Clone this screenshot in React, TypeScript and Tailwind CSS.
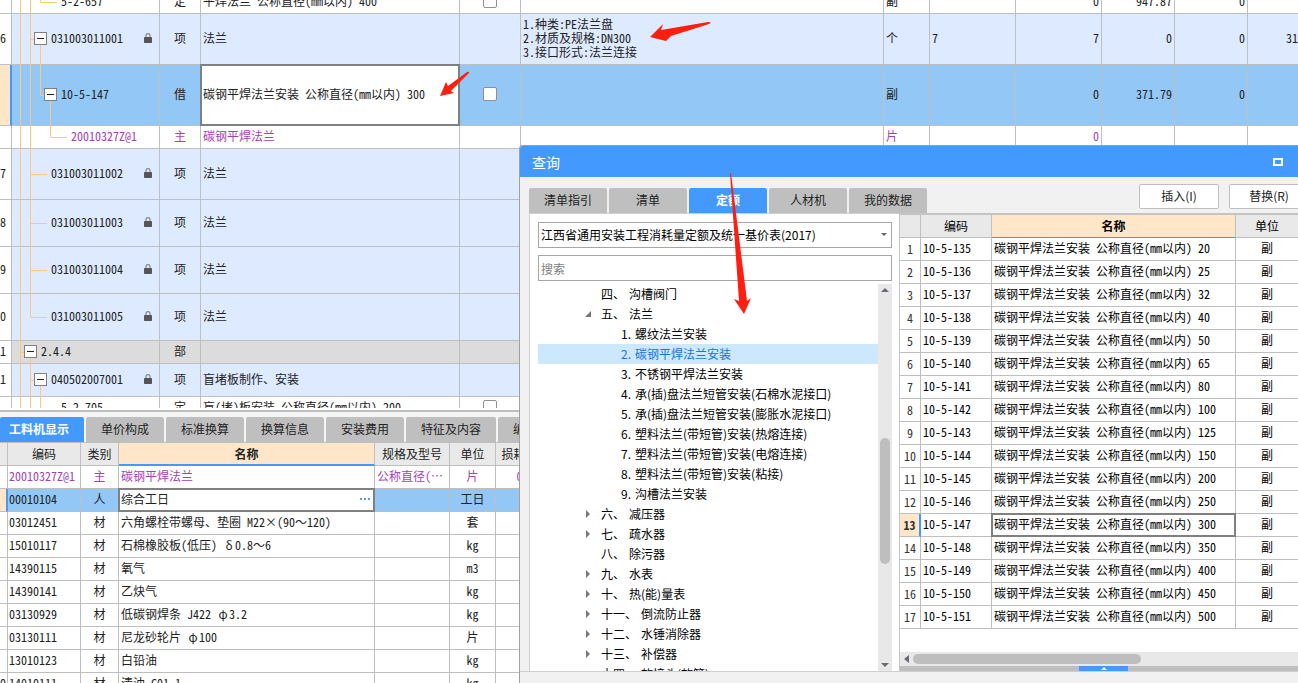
import clsx from 'clsx';

type TreeNode = { level: number; through: number[]; last?: boolean; box?: boolean };

type BillRow = {
  no: string;
  code: string;
  node: TreeNode;
  lock?: boolean;
  kind: string;
  name: string;
  check?: boolean;
  feature?: string[];
  unit?: string;
  expr?: string;
  values?: string[];
  height: string;
  tone: string;
  selected?: boolean;
};

const BILL_ROWS: BillRow[] = [
  { no: '', code: '5-2-657', node: { level: 2, through: [0, 1], last: true }, kind: '定', name: '平焊法兰 公称直径(mm以内) 400', check: true, unit: '副', values: ['0', '947.87', '0', ''], height: 'h-[23px]', tone: 'bg-white' },
  { no: '6', code: '031003011001', node: { level: 1, through: [0], box: true }, lock: true, kind: '项', name: '法兰', feature: ['1.种类:PE法兰盘', '2.材质及规格:DN300', '3.接口形式:法兰连接'], unit: '个', expr: '7', values: ['7', '0', '0', '31'], height: 'h-[51px]', tone: 'bg-[#deeaff]' },
  { no: '', code: '10-5-147', node: { level: 2, through: [0, 1], last: true, box: true }, kind: '借', name: '碳钢平焊法兰安装 公称直径(mm以内) 300', check: true, unit: '副', values: ['0', '371.79', '0', ''], height: 'h-[61px]', tone: 'bg-[#93c8f6]', selected: true },
  { no: '', code: '20010327Z@1', node: { level: 3, through: [0, 1], last: true }, kind: '主', name: '碳钢平焊法兰', unit: '片', values: ['0', '', '', ''], height: 'h-[23px]', tone: 'bg-white text-[#a53fb5]' },
  { no: '7', code: '031003011002', node: { level: 1, through: [0] }, lock: true, kind: '项', name: '法兰', height: 'h-[51px]', tone: 'bg-[#deeaff]' },
  { no: '8', code: '031003011003', node: { level: 1, through: [0] }, lock: true, kind: '项', name: '法兰', height: 'h-[47px]', tone: 'bg-[#deeaff]' },
  { no: '9', code: '031003011004', node: { level: 1, through: [0] }, lock: true, kind: '项', name: '法兰', height: 'h-[47px]', tone: 'bg-[#deeaff]' },
  { no: '0', code: '031003011005', node: { level: 1, through: [0], last: true }, lock: true, kind: '项', name: '法兰', height: 'h-[47px]', tone: 'bg-[#deeaff]' },
  { no: '1', code: '2.4.4', node: { level: 0, through: [], box: true }, kind: '部', name: '', height: 'h-[23px]', tone: 'bg-[#dcdcdc]' },
  { no: '1', code: '040502007001', node: { level: 1, through: [0], box: true }, lock: true, kind: '项', name: '盲堵板制作、安装', height: 'h-[33px]', tone: 'bg-[#deeaff]' },
  { no: '', code: '5-2-705', node: { level: 2, through: [0, 1], last: true }, kind: '定', name: '盲(堵)板安装 公称直径(mm以内) 200', check: true, height: 'h-[23px]', tone: 'bg-white' },
];

const MATERIALS = [
  { no: '', code: '20010327Z@1', kind: '主', name: '碳钢平焊法兰', spec: '公称直径(…', unit: '片', loss: '0' },
  { no: '', code: '00010104', kind: '人', name: '综合工日', spec: '', unit: '工日', loss: '' },
  { no: '', code: '03012451', kind: '材', name: '六角螺栓带螺母、垫圈 M22×(90～120)', spec: '', unit: '套', loss: '' },
  { no: '', code: '15010117', kind: '材', name: '石棉橡胶板(低压) δ0.8～6', spec: '', unit: 'kg', loss: '' },
  { no: '', code: '14390115', kind: '材', name: '氧气', spec: '', unit: 'm3', loss: '' },
  { no: '', code: '14390141', kind: '材', name: '乙炔气', spec: '', unit: 'kg', loss: '' },
  { no: '', code: '03130929', kind: '材', name: '低碳钢焊条 J422 φ3.2', spec: '', unit: 'kg', loss: '' },
  { no: '', code: '03130111', kind: '材', name: '尼龙砂轮片 φ100', spec: '', unit: '片', loss: '' },
  { no: '', code: '13010123', kind: '材', name: '白铅油', spec: '', unit: 'kg', loss: '' },
  { no: '0', code: '14010111', kind: '材', name: '清油 C01-1', spec: '', unit: 'kg', loss: '' },
];

const DETAIL_TABS = [
  { label: '工料机显示', width: 'w-[84px]' },
  { label: '单价构成', width: 'w-[78px]' },
  { label: '标准换算', width: 'w-[78px]' },
  { label: '换算信息', width: 'w-[78px]' },
  { label: '安装费用', width: 'w-[78px]' },
  { label: '特征及内容', width: 'w-[90px]' },
  { label: '编制说明', width: 'w-[78px]' },
];

const QUERY_TABS = ['清单指引', '清单', '定额', '人材机', '我的数据'];

const CHAPTERS = [
  { no: '四、', title: '沟槽阀门' },
  { no: '五、', title: '法兰', arrow: 'open' },
  { no: '1.', title: '螺纹法兰安装', child: true },
  { no: '2.', title: '碳钢平焊法兰安装', child: true, active: true },
  { no: '3.', title: '不锈钢平焊法兰安装', child: true },
  { no: '4.', title: '承(插)盘法兰短管安装(石棉水泥接口)', child: true },
  { no: '5.', title: '承(插)盘法兰短管安装(膨胀水泥接口)', child: true },
  { no: '6.', title: '塑料法兰(带短管)安装(热熔连接)', child: true },
  { no: '7.', title: '塑料法兰(带短管)安装(电熔连接)', child: true },
  { no: '8.', title: '塑料法兰(带短管)安装(粘接)', child: true },
  { no: '9.', title: '沟槽法兰安装', child: true },
  { no: '六、', title: '减压器', arrow: 'closed' },
  { no: '七、', title: '疏水器', arrow: 'closed' },
  { no: '八、', title: '除污器' },
  { no: '九、', title: '水表', arrow: 'closed' },
  { no: '十、', title: '热(能)量表', arrow: 'closed' },
  { no: '十一、', title: '倒流防止器', arrow: 'closed' },
  { no: '十二、', title: '水锤消除器', arrow: 'closed' },
  { no: '十三、', title: '补偿器', arrow: 'closed' },
  { no: '十四、', title: '软接头(软管)' },
];

const SIZES = [20, 25, 32, 40, 50, 65, 80, 100, 125, 150, 200, 250, 300, 350, 400, 450, 500];
const QUOTAS = SIZES.map((size, i) => ({
  code: `10-5-${135 + i}`,
  name: `碳钢平焊法兰安装 公称直径(mm以内) ${size}`,
  active: size === 300,
}));

const GRID_FONT = "font-['Noto_Sans_Mono_CJK_SC','Noto_Sans_CJK_SC',monospace]";
const UI_FONT = "font-['Noto_Sans_CJK_SC',sans-serif]";
const TABLE = 'w-full table-fixed border-separate border-spacing-0';
const HEAD = 'border-r border-b border-[#bfbfbf] p-0 whitespace-nowrap overflow-hidden';
const CELL = 'border-r border-b border-[#bfbfbf] px-0 pt-0 pb-0.5 whitespace-nowrap overflow-hidden';
const ACTIVE_CELL =
  'relative z-10 bg-white overflow-visible! after:pointer-events-none after:absolute after:-inset-px after:border-2 after:border-[#808080]';

function LockIcon() {
  return (
    <svg viewBox="0 0 8 10" className="mr-[7px] h-2.5 w-2 shrink-0" aria-hidden="true">
      <path d="M2 5V2.6a2 2 0 0 1 4 0V5" fill="none" stroke="#8a8d93" strokeWidth="1.3" />
      <rect y="4" width="8" height="6" rx="0.8" fill="#555" />
    </svg>
  );
}

// Greek size marks take a full character cell
function MaterialName({ name }: { name: string }) {
  return (
    <span className="whitespace-pre">
      {name.split(/([δφ])/).map((part, i) =>
        i % 2 ? (
          <span key={i} className="inline-block w-3 text-center">
            {part}
          </span>
        ) : (
          part
        ),
      )}
    </span>
  );
}

const levelX = (level: number) => 8.5 + level * 10;

function TreeLines({ node }: { node: TreeNode }) {
  const x = levelX(node.level);
  return (
    <svg className="pointer-events-none absolute top-0 left-0 h-[calc(100%+1px)] w-full" stroke="#ffc67c" aria-hidden="true">
      {node.through.map((level) => (
        <line key={level} x1={levelX(level)} x2={levelX(level)} y1="0" y2="100%" />
      ))}
      <line x1={x} x2={x} y1="0" y2={node.last ? '50%' : '100%'} />
      <line x1={x} x2={x + (node.box ? 5 : 16)} y1="50%" y2="50%" shapeRendering="crispEdges" />
      {node.box && <line x1={x + 10} x2={x + 10} y1="50%" y2="100%" />}
    </svg>
  );
}

function BillGrid() {
  return (
    <div className="mb-px min-h-0 flex-1 overflow-hidden">
      <table className={clsx(TABLE, '-mt-[9px] text-xs leading-[14px] text-[#222]')}>
        <colgroup>
          <col className="w-3" />
          <col className="w-[148px]" />
          <col className="w-[41px]" />
          <col className="w-[259px]" />
          <col className="w-[61px]" />
          <col className="w-[363px]" />
          <col className="w-[46px]" />
          <col className="w-[86px]" />
          <col className="w-[86px]" />
          <col className="w-[73px]" />
          <col className="w-[73px]" />
          <col />
        </colgroup>
        <tbody>
          {BILL_ROWS.map((row) => (
            <tr key={row.code} className={clsx(row.height, row.tone)}>
              <td className={clsx(CELL, row.selected ? 'border-r-2 border-r-[#4499ff] bg-[#ffe6c9]' : 'bg-white')}>
                {row.no}
              </td>
              <td className="relative border-r border-b border-[#bfbfbf] px-0 pt-0 pb-0.5">
                <TreeLines node={row.node} />
                <div className="relative flex items-center">
                  <span className="shrink-0" style={{ width: row.node.level * 10 + 12 }} />
                  {row.node.box ? (
                    <button type="button" aria-label="折叠" className="mr-1 flex size-[13px] shrink-0 items-center justify-center border border-[#808080] bg-white">
                      <span className="h-px w-[7px] bg-[#222]" />
                    </button>
                  ) : (
                    <span className="w-[17px] shrink-0" />
                  )}
                  <span className="flex-1">{row.code}</span>
                  {row.lock && <LockIcon />}
                </div>
              </td>
              <td className={clsx(CELL, 'text-center')}>{row.kind}</td>
              <td className={clsx(CELL, 'pl-0.5', row.selected && ACTIVE_CELL)}>{row.name}</td>
              <td className={CELL}>
                {row.check && (
                  <input type="checkbox" aria-label="选择" className="mx-auto block size-3.5 appearance-none rounded-xs border border-[#8f8f8f] bg-white" />
                )}
              </td>
              <td className={clsx(CELL, 'pl-0.5')}>
                {row.feature?.map((line) => <div key={line}>{line}</div>)}
              </td>
              <td className={clsx(CELL, 'pl-0.5')}>{row.unit}</td>
              <td className={clsx(CELL, 'pl-0.5')}>{row.expr}</td>
              {(row.values ?? ['', '', '', '']).map((value, i) => (
                <td key={i} className={clsx(CELL, 'text-right', i < 3 && 'pr-0.5', i === 3 && 'border-r-0')}>
                  {value}
                </td>
              ))}
            </tr>
          ))}
        </tbody>
      </table>
    </div>
  );
}

function DetailPanel() {
  return (
    <section className="h-[274px] shrink-0 overflow-hidden bg-white pt-px">
      <div className={clsx(UI_FONT, 'flex gap-0.5 border-t-2 border-b border-[#bfbfbf] bg-[#f4f4f4] pt-[5px] text-xs text-[#222]')}>
        {DETAIL_TABS.map((tab, i) => (
          <button
            key={tab.label}
            type="button"
            className={clsx('h-[25px] shrink-0 rounded-t-xs pb-0.5', tab.width, i === 0 ? 'bg-[#4499ff] pr-1.5 font-bold text-white' : 'bg-[#bfbfbf]')}
          >
            {tab.label}
          </button>
        ))}
      </div>
      <table className={clsx(TABLE, 'text-xs leading-[14px] text-[#222]')}>
        <colgroup>
          <col className="w-2" />
          <col className="w-[73px]" />
          <col className="w-[38px]" />
          <col className="w-64" />
          <col className="w-[75px]" />
          <col className="w-[46px]" />
          <col className="w-12" />
          <col />
        </colgroup>
        <thead>
          <tr className="h-[23px] bg-[#e9e9e9] [&>th]:font-normal">
            <th className={HEAD} />
            <th className={HEAD}>编码</th>
            <th className={HEAD}>类别</th>
            <th className={clsx(HEAD, 'border-b-2 border-b-[#4499ff] bg-[#ffe6c9]')}>
              <b>名称</b>
            </th>
            <th className={HEAD}>规格及型号</th>
            <th className={HEAD}>单位</th>
            <th className={HEAD}>损耗率</th>
            <th className={HEAD} />
          </tr>
        </thead>
        <tbody>
          {MATERIALS.map((item, i) => {
            const active = i === 1;
            return (
              <tr key={item.code} className={clsx('h-[23px]', active && 'bg-[#93c8f6]', i === 0 && 'text-[#a53fb5]')}>
                <td className={clsx(CELL, active && 'border-r-2 border-r-[#4499ff] bg-[#ffe6c9]')}>{item.no}</td>
                <td className={clsx(CELL, 'pl-px')}>{item.code}</td>
                <td className={clsx(CELL, 'text-center')}>{item.kind}</td>
                <td className={clsx(CELL, 'pl-0.5', active && ACTIVE_CELL)}>
                  <div className="flex items-center justify-between pr-1">
                    <MaterialName name={item.name} />
                    {active && (
                      <button type="button" aria-label="更多" className="flex gap-0.5">
                        <span className="size-0.5 bg-[#5aa0d8]" />
                        <span className="size-0.5 bg-[#5aa0d8]" />
                        <span className="size-0.5 bg-[#5aa0d8]" />
                      </button>
                    )}
                  </div>
                </td>
                <td className={clsx(CELL, 'pl-0.5')}>{item.spec}</td>
                <td className={clsx(CELL, 'text-center')}>{item.unit}</td>
                <td className={clsx(CELL, 'text-center')}>{item.loss}</td>
                <td className={CELL} />
              </tr>
            );
          })}
        </tbody>
      </table>
    </section>
  );
}

function ChapterTree() {
  return (
    <div className="mt-[3px] flex min-h-0 flex-1">
      <ul className="min-w-0 flex-1 overflow-hidden">
        {CHAPTERS.map((item) => (
          <li
            key={item.no}
            className={clsx('flex h-5 items-center gap-1 whitespace-nowrap', item.child ? 'pl-[83px]' : 'pl-[46px]', item.active && 'bg-[#cce8ff] text-[#1a73e0]')}
          >
            {!item.child && (
              <svg viewBox="0 0 8 8" className="mr-[5px] size-2 shrink-0 fill-[#777]" aria-hidden="true">
                {item.arrow === 'open' && <path d="M7 1v6H1z" />}
                {item.arrow === 'closed' && <path d="M2 0l4 4-4 4z" />}
              </svg>
            )}
            <span>{item.no}</span>
            <span>{item.title}</span>
          </li>
        ))}
      </ul>
      <div className="flex w-3.5 flex-col items-center justify-between bg-[#e8e8e8] py-1">
        <svg viewBox="0 0 8 4" className="h-1 w-2 fill-[#6b6b74]" aria-hidden="true">
          <path d="M4 0l4 4H0z" />
        </svg>
        <div className="mt-[46px] h-[126px] w-2.5 rounded-full bg-[#bebebe]" />
        <svg viewBox="0 0 8 4" className="h-1 w-2 fill-[#6b6b74]" aria-hidden="true">
          <path d="M4 4l4-4H0z" />
        </svg>
      </div>
    </div>
  );
}

function QuotaTable() {
  return (
    <div className="flex min-w-0 flex-1 flex-col border-t-2 border-l border-[#c4c4c4] bg-white">
      <div className="min-h-0 flex-1 overflow-hidden">
        <table className={clsx(TABLE, GRID_FONT, 'text-xs leading-[14px] text-black')}>
          <colgroup>
            <col className="w-[21px]" />
            <col className="w-[71px]" />
            <col className="w-[244px]" />
            <col />
          </colgroup>
          <thead>
            <tr className="h-[23px] bg-[#e9e9e9] [&>th]:font-normal">
              <th className={HEAD} />
              <th className={HEAD}>编码</th>
              <th className={clsx(HEAD, 'border-b-[#4499ff] bg-[#ffe6c9]')}>
                <b>名称</b>
              </th>
              <th className={clsx(HEAD, 'border-r-0')}>单位</th>
            </tr>
          </thead>
          <tbody>
            {QUOTAS.map((quota, i) => (
              <tr key={quota.code} className="h-[23px]">
                <td className={clsx(HEAD, 'text-center text-[#333]', quota.active && 'border-r-2 border-r-[#4499ff] bg-[#ffe6c9] font-bold')}>
                  {i + 1}
                </td>
                <td className={clsx(CELL, 'pl-0.5')}>{quota.code}</td>
                <td className={clsx(CELL, 'pl-0.5', quota.active && ACTIVE_CELL)}>{quota.name}</td>
                <td className={clsx(CELL, 'border-r-0 text-center')}>副</td>
              </tr>
            ))}
          </tbody>
        </table>
      </div>
      <div className="flex h-3.5 items-center gap-1 bg-[#e8e8e8] pl-1">
        <svg viewBox="0 0 5 8" className="h-2 w-[5px] fill-[#6b6b74]" aria-hidden="true">
          <path d="M5 0v8L0 4z" />
        </svg>
        <div className="h-2.5 w-[228px] rounded-full bg-[#bebebe]" />
      </div>
      <div className="h-[5px] bg-[#bfbfbf] pl-[179px]">
        <button type="button" aria-label="展开" className="flex h-[5px] w-[49px] items-center justify-center bg-[#4499ff]">
          <svg viewBox="0 0 6 3" className="h-[3px] w-1.5 fill-white" aria-hidden="true">
            <path d="M3 0l3 3H0z" />
          </svg>
        </button>
      </div>
    </div>
  );
}

function QueryDialog() {
  return (
    <section
      role="dialog"
      aria-label="查询"
      className={clsx(UI_FONT, 'absolute top-[145px] right-0 bottom-0 left-[519px] z-20 flex flex-col overflow-hidden rounded-tl-sm border-t border-l border-[#a0a0a0] bg-[#f1f1f1] text-xs text-black')}
    >
      <header className="flex h-[31px] shrink-0 items-center justify-between bg-[#4499ff] pr-[15px] pl-3 text-white">
        <h2 className="text-sm leading-5">查询</h2>
        <button type="button" aria-label="最大化" className="h-2 w-2.5 border-2 border-white" />
      </header>

      <div className="-mr-[11px] flex shrink-0 items-end pt-[7px] pl-[9px] text-[#222]">
        <div className="flex gap-0.5">
          {QUERY_TABS.map((tab) => (
            <button
              key={tab}
              type="button"
              className={clsx('h-[25px] w-[78px] rounded-t-xs pb-0.5', tab === '定额' ? 'bg-[#4499ff] font-bold text-white' : 'bg-[#bfbfbf]')}
            >
              {tab}
            </button>
          ))}
        </div>
        <div className="mb-1 ml-auto flex gap-2.5">
          {['插入(I)', '替换(R)'].map((label) => (
            <button key={label} type="button" className="h-[25px] w-20 rounded-xs border border-[#bfbfbf] bg-white pb-0.5">
              {label}
            </button>
          ))}
        </div>
      </div>

      <div className="flex min-h-0 flex-1 border-b border-[#cfcfcf] pl-[9px]">
        <div className="flex w-[370px] shrink-0 flex-col border-t border-l border-[#cfcfcf] bg-white pt-2 pr-[7px] pl-2">
          <div className="relative shrink-0">
            <select aria-label="定额库" className="block h-[26px] w-full appearance-none border border-[#a6a6a6] bg-white px-0.5">
              <option>江西省通用安装工程消耗量定额及统一基价表(2017)</option>
            </select>
            <svg viewBox="0 0 6 3" className="pointer-events-none absolute top-[11px] right-[5px] h-[3px] w-1.5 fill-[#666]" aria-hidden="true">
              <path d="M0 0h6L3 3z" />
            </svg>
          </div>
          <input
            type="text"
            aria-label="搜索"
            placeholder="搜索"
            className="mt-[7px] h-[26px] w-full shrink-0 border border-[#a6a6a6] bg-white px-0.5 placeholder:text-[#808080]"
          />
          <ChapterTree />
        </div>
        <QuotaTable />
      </div>
      <footer className="h-[11px] shrink-0" />
    </section>
  );
}

function Annotations() {
  const arrows = [
    'M650 37L663 24L661 30L708 22Q713 22 709 24L671 36L666 41Z',
    'M440 96L446 82L448 86L467 72Q471 71 468 74L451 91L454 93Z',
    'M730 173L739 301L734 299L744 314L751 298L747 301L731 173Z',
  ];
  return (
    <svg className="pointer-events-none absolute top-0 left-0 z-30 h-80 w-[760px] fill-[#ff1f10]" aria-hidden="true">
      {arrows.map((d) => (
        <path key={d} d={d} />
      ))}
    </svg>
  );
}

export default function App() {
  return (
    <main className={clsx(GRID_FONT, 'relative flex h-screen flex-col overflow-hidden bg-white')}>
      <BillGrid />
      <DetailPanel />
      <QueryDialog />
      <Annotations />
    </main>
  );
}
